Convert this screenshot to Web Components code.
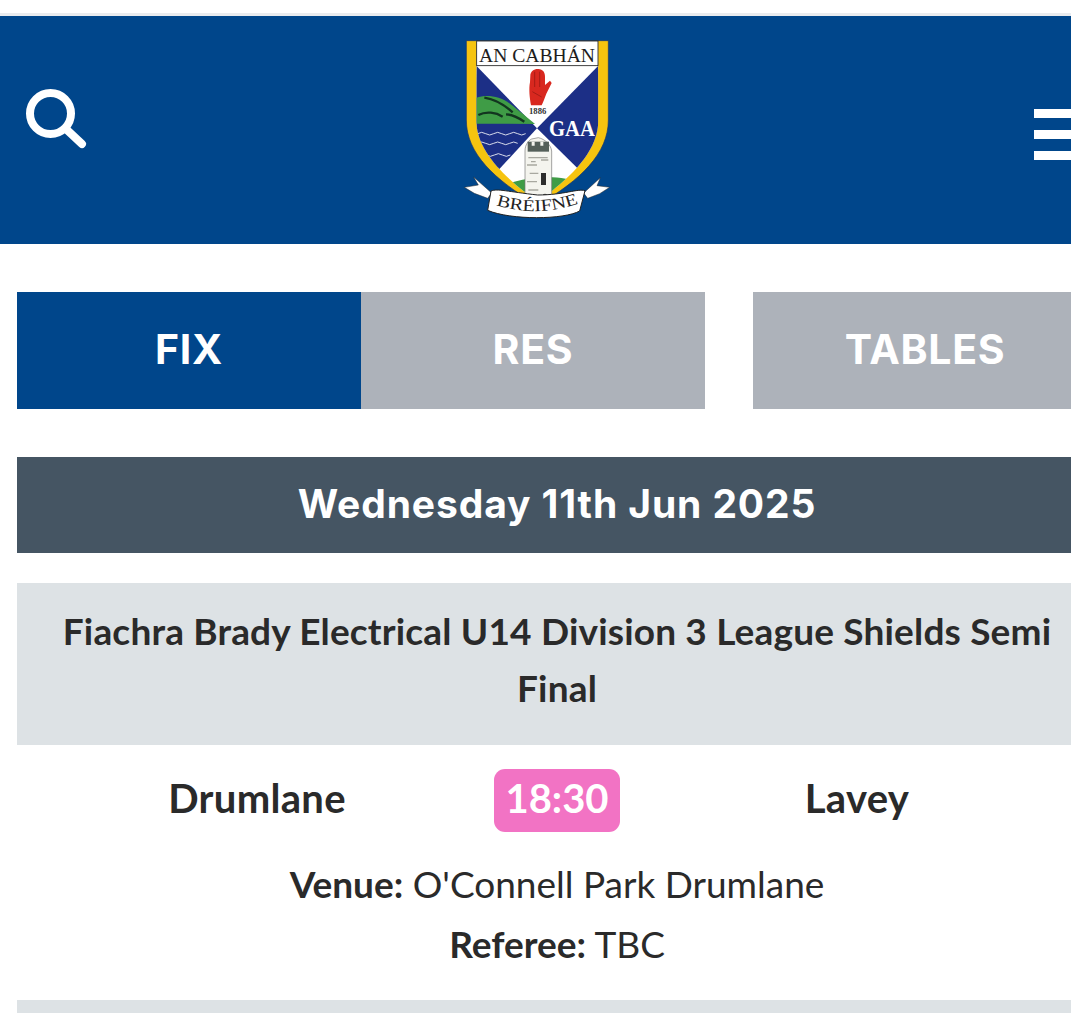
<!DOCTYPE html>
<html lang="en">
<head>
<meta charset="utf-8">
<title>Fixtures</title>
<style>
html,body{margin:0;padding:0;background:#fff;overflow:hidden;height:1013px;}
body{font-family:"Lato","Noto Sans",sans-serif;color:#2a2a2a;}
</style>
</head>
<body>
<site-header></site-header>
<tab-bar>
  <tab-btn active>FIX</tab-btn>
  <tab-btn>RES</tab-btn>
  <tab-btn slot="side">TABLES</tab-btn>
</tab-bar>
<date-bar>Wednesday 11th Jun 2025</date-bar>
<fixture-card>
  <span slot="title">Fiachra Brady Electrical U14 Division 3 League Shields Semi Final</span>
  <span slot="home">Drumlane</span>
  <span slot="time">18:30</span>
  <span slot="away">Lavey</span>
  <span slot="venue">O'Connell Park Drumlane</span>
  <span slot="referee">TBC</span>
</fixture-card>
<script>
const logoSvg = `
<svg width="190" height="205" viewBox="0 0 570 615" xmlns="http://www.w3.org/2000/svg">
  <defs>
    <clipPath id="inner"><path d="M106 47H472V285C472 370 405 440 330 500H250C175 440 106 370 106 285Z"/></clipPath>
    <path id="ribbonLine" d="M165 540Q290 580 420 533"/>
  </defs>
  <path d="M76 47H502V285C502 385 420 465 290 540C160 465 76 385 76 285Z" fill="#f6c40f"/>
  <g clip-path="url(#inner)">
    <rect x="100" y="47" width="380" height="470" fill="#fff"/>
    <path d="M106 122L288 310L140 470L100 440Z" fill="#1c2f86"/>
    <path d="M472 122L288 310L440 460L480 420Z" fill="#1c2f86"/>
    <path d="M106 218C135 208 175 212 205 235C235 258 262 280 282 297L106 296Z" fill="#3f9c46"/>
    <path d="M130 218C160 222 190 240 215 262M112 270C135 258 165 262 185 275M195 268C215 268 235 280 250 290" fill="none" stroke="#12351f" stroke-width="7"/>
    <path d="M110 326q12 -8 24 0t24 0t24 0t24 0t24 0t24 0M110 355q12 -8 24 0t24 0t24 0t24 0t24 0M112 390q12 -8 24 0t24 0t24 0t24 0M125 430q12 -8 24 0t24 0" fill="none" stroke="#fff" stroke-width="2.5"/>
    <path d="M165 490C210 470 245 462 290 458C340 452 385 462 420 475L340 530H230Z" fill="#3f9c46"/>
  </g>
  <path d="M76 47H502V285C502 385 420 465 290 540C160 465 76 385 76 285Z" fill="none" stroke="#16306e" stroke-width="2"/>
  <rect x="107" y="48" width="364" height="74" fill="#fff" stroke="#1b1b1b" stroke-width="2.5"/>
  <text x="288" y="110" font-family="'Liberation Serif',serif" font-size="58" fill="#1d1d1d" text-anchor="middle" textLength="348" lengthAdjust="spacingAndGlyphs">AN CABHÁN</text>
  <path d="M268 152C268 139 280 131 292 132C306 133 312 142 312 155V180L327 167L332 174L316 206C311 220 306 232 302 241H270C266 220 263 190 267 172Z" fill="#d8281f"/>
  <path d="M281 140V186M296 140V186M274 200L302 216" stroke="#8e1710" stroke-width="2" fill="none"/>
  <text x="290" y="266" font-family="'Liberation Serif',serif" font-size="26" font-weight="700" fill="#333" text-anchor="middle">1886</text>
  <text x="393" y="334" font-family="'Liberation Serif',serif" font-size="72" font-weight="700" fill="#fff" text-anchor="middle" textLength="138" lengthAdjust="spacingAndGlyphs">GAA</text>
  <path d="M252 522V378C252 360 262 346 272 342L292 338C312 342 330 360 332 378V522Z" fill="#f4f4ee" stroke="#777" stroke-width="2"/>
  <path d="M260 350h64v30h-64z" fill="#55605a"/>
  <path d="M272 350h9v12h-9zM298 350h9v12h-9z" fill="#f4f4ee"/>
  <path d="M300 444h15v36h-15z" fill="#2d2d2d"/>
  <path d="M302 526v-14q10 -12 20 0v14z" fill="#2d2d2d"/>
  <path d="M262 398h58M258 420h30M266 445h26M258 470h30M262 495h30M300 405h22M270 410h14" stroke="#a8a8a0" stroke-width="4" fill="none"/>
  <path d="M152 504L98 456L112 480L70 487L100 505L140 520Z" fill="#fff" stroke="#2a2a2a" stroke-width="1.5"/>
  <path d="M428 504L478 458L468 482L506 487L476 506L440 520Z" fill="#fff" stroke="#2a2a2a" stroke-width="1.5"/>
  <path d="M150 498C170 490 200 500 290 510C370 510 410 490 432 497L416 558C370 584 210 586 140 556Z" fill="#fff" stroke="#222" stroke-width="3"/>
  <text font-family="'Liberation Serif',serif" font-size="50" fill="#222" textLength="252" lengthAdjust="spacingAndGlyphs"><textPath href="#ribbonLine">BRÉIFNE</textPath></text>
</svg>`

class SiteHeader extends HTMLElement {
  constructor() {
    super()
    this._shadowDom = this.attachShadow({ mode: 'open' })
    this._shadowDom.innerHTML = `
    <style>
      :host{display:block;margin-top:13px;border-top:3px solid #e9ebee;}
      .bar{background:#00468b;height:228px;display:grid;grid-template-columns:1fr 190px 1fr;align-items:center;width:1071px;}
      .search{display:block;margin:0 0 16px 20px;}
      .logo{display:block;height:205px;margin-top:-5px;}
      .menu{justify-self:end;display:flex;flex-direction:column;gap:12px;width:37px;margin-top:8px;}
      .menu i{display:block;height:9px;background:#fff;}
    </style>
    <div class="bar">
      <svg class="search" width="72" height="72" viewBox="0 0 72 72">
        <circle cx="30.5" cy="27.5" r="20.5" fill="none" stroke="#fff" stroke-width="8"/>
        <path d="M46 43L62 58" stroke="#fff" stroke-width="8" stroke-linecap="round"/>
      </svg>
      <div class="logo">${logoSvg}</div>
      <div class="menu"><i></i><i></i><i></i></div>
    </div>`
  }
}

class TabBar extends HTMLElement {
  constructor() {
    super()
    this._shadowDom = this.attachShadow({ mode: 'open' })
    this._shadowDom.innerHTML = `
    <style>
      :host{display:flex;gap:48px;margin:48px 0 0 17px;width:1080px;}
      .group{display:flex;}
    </style>
    <div class="group"><slot></slot></div>
    <div class="group"><slot name="side"></slot></div>`
  }
}

class TabBtn extends HTMLElement {
  constructor() {
    super()
    this._shadowDom = this.attachShadow({ mode: 'open' })
    this._shadowDom.innerHTML = `
    <style>
      :host{display:flex;align-items:center;justify-content:center;box-sizing:border-box;width:344px;height:117px;padding-bottom:2px;background:#adb2ba;color:#fff;
        font:700 41px/1 "Inter","Liberation Sans",sans-serif;letter-spacing:.7px;}
      :host([active]){background:#00468b;}
    </style>
    <slot></slot>`
  }
}

class DateBar extends HTMLElement {
  constructor() {
    super()
    this._shadowDom = this.attachShadow({ mode: 'open' })
    this._shadowDom.innerHTML = `
    <style>
      :host{display:flex;align-items:center;justify-content:center;box-sizing:border-box;width:1080px;height:96px;padding-bottom:4px;margin:48px 0 0 17px;
        background:#455563;color:#fff;font:700 39px/1 "Inter","Liberation Sans",sans-serif;letter-spacing:.9px;}
    </style>
    <slot></slot>`
  }
}

class FixtureCard extends HTMLElement {
  constructor() {
    super()
    this._shadowDom = this.attachShadow({ mode: 'open' })
    this._shadowDom.innerHTML = `
    <style>
      :host{display:block;width:1080px;margin:30px 0 0 17px;color:#2a2a2a;}
      .title{background:#dde2e5;padding:19px 40px 29px;text-align:center;font-size:37px;font-weight:700;line-height:57px;letter-spacing:.17px;}
      .teams{display:grid;grid-template-columns:1fr 126px 1fr;padding:24px 3px 0;align-items:center;text-align:center;font-size:40px;font-weight:700;letter-spacing:.3px;}
      .teams div{margin-top:-6px;}
      .time{height:63px;border-radius:11px;background:#f273c4;color:#fff;display:flex;align-items:center;justify-content:center;margin-top:0!important;letter-spacing:0;}
      .time span{margin-top:-6px;}
      .info{text-align:center;font-size:37px;line-height:60px;margin-top:22px;}
      .info b{font-weight:700;}
      .next{height:13px;background:#dde2e5;margin-top:26px;}
    </style>
    <div class="title"><slot name="title"></slot></div>
    <div class="teams">
      <div><slot name="home"></slot></div>
      <div class="time"><span><slot name="time"></slot></span></div>
      <div><slot name="away"></slot></div>
    </div>
    <div class="info">
      <div><b>Venue:</b> <slot name="venue"></slot></div>
      <div><b>Referee:</b> <slot name="referee"></slot></div>
    </div>
    <div class="next"></div>`
  }
}

window.customElements.define('site-header', SiteHeader)
window.customElements.define('tab-bar', TabBar)
window.customElements.define('tab-btn', TabBtn)
window.customElements.define('date-bar', DateBar)
window.customElements.define('fixture-card', FixtureCard)
</script>
</body>
</html>
